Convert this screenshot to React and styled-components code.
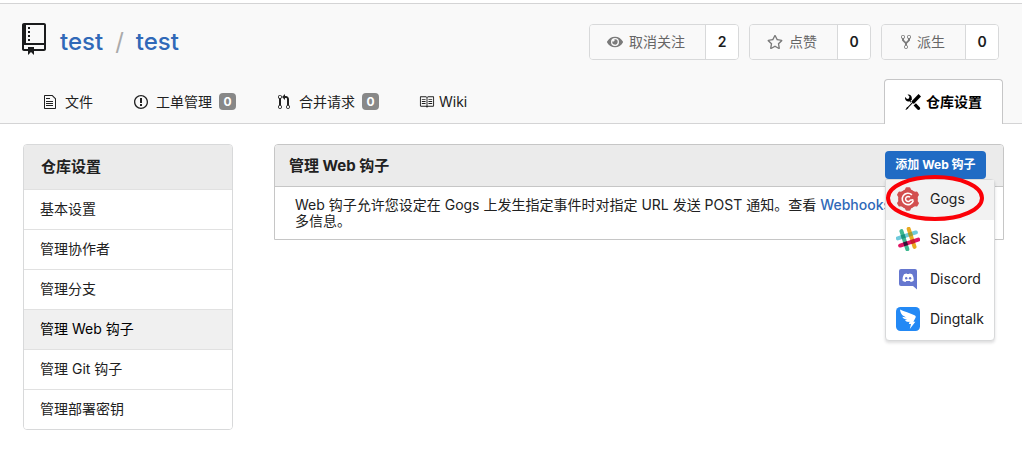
import React from "react";
import styled, { createGlobalStyle, css } from "styled-components";
import { FaEye, FaRegStar } from "react-icons/fa";

const GlobalStyle = createGlobalStyle`
  *, *::before, *::after { box-sizing: border-box; }
  body {
    margin: 0;
    background: #fff;
    color: #212121;
    font-family: Inter, "Noto Sans CJK SC", sans-serif;
    font-size: 14px;
    line-height: 16px;
  }
  button { font: inherit; cursor: pointer; }
  a { text-decoration: none; color: inherit; }
  ul { list-style: none; margin: 0; padding: 0; }
  h1, h2, h3, p { margin: 0; }
`;

const Header = styled.header`
  margin-top: 3px;
  padding: 20px 19px 0 22px;
  background: #f9f9f9;
  border-top: 1px solid #d4d4d5;
  border-bottom: 1px solid #d4d4d5;
`;

const TitleRow = styled.div`
  display: flex;
  align-items: center;
  justify-content: space-between;
  padding-right: 4px;
  height: 36px;
`;

const RepoTitle = styled.h1`
  display: flex;
  align-items: center;
  font-size: 24px;
  line-height: 32px;
  font-weight: 400;
  color: #1b1c1d;
`;

const RepoLink = styled.a`
  color: #3069b8;
  font-weight: 500;
`;

const RepoIcon = styled.span`
  display: flex;
  margin-right: 14px;
  padding-bottom: 6px;
`;

const Slash = styled.span`
  margin: 0 12px;
  color: #aaa;
`;

const Actions = styled.div`
  display: flex;
  gap: 10px;
`;

const ActionGroup = styled.div`
  display: flex;
  height: 36px;
  border: 1px solid #d8d9da;
  border-radius: 4px;
  overflow: hidden;
`;

const ActionButton = styled.button`
  display: flex;
  align-items: center;
  gap: 6px;
  padding: 0 20px 0 ${(p) => p.$start || 17}px;
  border: 0;
  background: #f9f9f9;
  color: #666;
  svg { color: #7a7a7a; }
`;

const Count = styled.a`
  display: flex;
  align-items: center;
  justify-content: center;
  width: 33px;
  border-left: 1px solid #d8d9da;
  background: #fff;
  font-weight: 600;
  color: #1b1c1d;
`;

const Tabs = styled.nav`
  display: flex;
  align-items: flex-end;
  gap: 4px;
  margin-top: 19px;
  margin-bottom: -1px;
  padding-left: 2px;
`;

const Tab = styled.a`
  display: flex;
  align-items: center;
  height: 45px;
  padding: 0 18px;
  gap: ${(p) => p.$gap || 7}px;
  color: #212121;
  ${(p) =>
    p.$active &&
    css`
      margin-left: auto;
      padding: 0 20px;
      border: 1px solid #c6c6c7;
      border-bottom: 0;
      border-radius: 4px 4px 0 0;
      background: #fff;
      color: #000;
      font-weight: 700;
    `}
`;

const TabIcon = styled.span`
  display: flex;
  justify-content: center;
  width: 16px;
`;

const Badge = styled.span`
  width: 17px;
  border-radius: 4px;
  background: #888;
  color: #fff;
  font-size: 12px;
  font-weight: 700;
  line-height: 17px;
  text-align: center;
`;

const Content = styled.main`
  display: grid;
  grid-template-columns: 210px 1fr;
  gap: 41px;
  align-items: start;
  padding: 20px 18px 19px 23px;
`;

const SideMenu = styled.nav`
  border: 1px solid #d8d9da;
  border-radius: 4px;
  overflow: hidden;
`;

const SideTitle = styled.h2`
  padding: 14px 17px;
  background: #ebebeb;
  font-size: 15px;
  line-height: 16px;
  font-weight: 700;
`;

const SideLink = styled.a`
  display: block;
  height: 40px;
  padding: 11px 16px;
  border-top: 1px solid #e1e1e1;
  background: ${(p) => (p.$active ? "#f0f0f0" : "#fff")};
  color: ${(p) => (p.$active ? "#000" : "#212121")};
`;

const Panel = styled.section`
  border: 1px solid #c6c6c6;
  border-radius: 4px 4px 0 0;
`;

const PanelHeader = styled.div`
  display: flex;
  align-items: flex-start;
  justify-content: space-between;
  height: 42px;
  padding: 6px 17px 0 14px;
  background: #ebebeb;
  border-bottom: 1px solid #c6c6c6;
  border-radius: 3px 3px 0 0;
`;

const PanelTitle = styled.h3`
  font-size: 15px;
  line-height: 30px;
  font-weight: 700;
`;

const PanelText = styled.p`
  padding: 10px 20px;
`;

const DocLink = styled.a`
  color: #3069b8;
  font-weight: 500;
`;

const Dropdown = styled.div`
  position: relative;
`;

const AddButton = styled.button`
  display: block;
  width: 101px;
  height: 28px;
  padding: 0;
  border: 0;
  border-radius: 4px;
  background: #206bc4;
  color: #fff;
  font-size: 12px;
  font-weight: 700;
`;

const HookMenu = styled.ul`
  position: absolute;
  top: 100%;
  left: 0;
  width: 110px;
  border: 1px solid #d8d9da;
  border-radius: 0 4px 4px 4px;
  background: #fff;
  box-shadow: 0 2px 3px rgba(34, 36, 38, 0.15);
`;

const HookItem = styled.a`
  display: flex;
  align-items: center;
  gap: 10px;
  height: 40px;
  padding: 0 0 2px 10px;
  background: ${(p) => (p.$active ? "#f2f2f2" : "transparent")};
  svg { flex: none; }
`;

const Marker = styled.svg`
  position: absolute;
  top: 23px;
  left: 0;
  z-index: 2;
  overflow: visible;
  pointer-events: none;
`;

const paths = {
  repo: [12, "M4 9H3V8h1v1zm0-3H3v1h1V6zm0-2H3v1h1V4zm0-2H3v1h1V2zm8-1v12c0 .55-.45 1-1 1H6v2l-1.5-1.5L3 16v-2H1c-.55 0-1-.45-1-1V1c0-.55.45-1 1-1h10c.55 0 1 .45 1 1zm-1 10H1v2h2v-1h3v1h5v-2zm0-10H2v9h9V1z"],
  file: [12, "M6 5H2V4h4v1zM2 8h7V7H2v1zm0 2h7V9H2v1zm0 2h7v-1H2v1zm10-7.5V14c0 .55-.45 1-1 1H1c-.55 0-1-.45-1-1V2c0-.55.45-1 1-1h7.5L12 4.5zM11 5L8 2H1v12h10V5z"],
  issue: [14, "M7 2.3c3.14 0 5.7 2.56 5.7 5.7s-2.56 5.7-5.7 5.7A5.71 5.71 0 0 1 1.3 8c0-3.14 2.56-5.7 5.7-5.7zM7 1C3.14 1 0 4.14 0 8s3.14 7 7 7 7-3.14 7-7-3.14-7-7-7zm1 3H6v5h2V4zm0 6H6v2h2v-2z"],
  pull: [12, "M11 11.28V5c-.03-.78-.34-1.47-.94-2.06C9.46 2.35 8.78 2.03 8 2H7V0L4 3l3 3V4h1c.27.02.48.11.69.31.21.2.3.42.31.69v6.28A1.993 1.993 0 0 0 10 15a1.993 1.993 0 0 0 1-3.72zm-1 2.92c-.66 0-1.2-.55-1.2-1.2 0-.65.55-1.2 1.2-1.2.65 0 1.2.55 1.2 1.2 0 .65-.55 1.2-1.2 1.2zM4 3c0-1.11-.89-2-2-2a1.993 1.993 0 0 0-1 3.72v6.56A1.993 1.993 0 0 0 2 15a1.993 1.993 0 0 0 1-3.72V4.72c.59-.34 1-.98 1-1.72zm-.8 10c0 .66-.55 1.2-1.2 1.2-.65 0-1.2-.55-1.2-1.2 0-.65.55-1.2 1.2-1.2.65 0 1.2.55 1.2 1.2zM2 4.2C1.34 4.2.8 3.65.8 3c0-.65.55-1.2 1.2-1.2.65 0 1.2.55 1.2 1.2 0 .65-.55 1.2-1.2 1.2z"],
  book: [17, "M3 5h4v1H3V5zm0 3h4V7H3v1zm0 2h4V9H3v1zm11-5h-4v1h4V5zm0 2h-4v1h4V7zm0 2h-4v1h4V9zm2-6v9c0 .55-.45 1-1 1H9.5l-1 1-1-1H2c-.55 0-1-.45-1-1V3c0-.55.45-1 1-1h5.5l1 1 1-1H15c.55 0 1 .45 1 1zm-8 .5L7.5 3H2v9h6V3.5zm7-.5H9.5l-.5.5V12h6V3z"],
  tools: [16, "M4.48 7.27c.26.26 1.28 1.33 1.28 1.33l.56-.58-.88-.91 1.69-1.8s-.76-.74-.43-.45c.32-1.19.03-2.51-.87-3.44C4.93.5 3.66.2 2.52.51l1.93 2-.51 1.96-1.89.52-1.93-1.99C-.19 4.17.1 5.48 1 6.4c.94.98 2.29 1.26 3.48.87zm6.44 1.94l-2.33 2.3 3.84 3.98c.31.33.73.49 1.14.49.41 0 .82-.16 1.14-.49.63-.65.63-1.7 0-2.35l-3.79-3.93zM16 2.53L13.55 0 6.33 7.46l.88.91-4.31 4.46-.99.53-1.39 2.27.35.37 2.2-1.44.51-1.02L7.9 9.08l.88.91L16 2.53z"],
  fork: [10, "M8 1a1.993 1.993 0 0 0-1 3.72V6L5 8 3 6V4.72A1.993 1.993 0 0 0 2 1a1.993 1.993 0 0 0-1 3.72V6.5l3 3v1.78A1.993 1.993 0 0 0 5 15a1.993 1.993 0 0 0 1-3.72V9.5l3-3V4.72A1.993 1.993 0 0 0 8 1zM2 4.2C1.34 4.2.8 3.65.8 3c0-.65.55-1.2 1.2-1.2.65 0 1.2.55 1.2 1.2 0 .65-.55 1.2-1.2 1.2zm3 10c-.66 0-1.2-.55-1.2-1.2 0-.65.55-1.2 1.2-1.2.65 0 1.2.55 1.2 1.2 0 .65-.55 1.2-1.2 1.2zm3-10c-.66 0-1.2-.55-1.2-1.2 0-.65.55-1.2 1.2-1.2.65 0 1.2.55 1.2 1.2 0 .65-.55 1.2-1.2 1.2z"],
};

function Octicon({ name, size = 16 }) {
  const [w, d] = paths[name];
  return (
    <svg width={(w * size) / 16} height={size} viewBox={`0 0 ${w} 16`} fill="currentColor" aria-hidden="true">
      <path d={d} />
    </svg>
  );
}

const GogsLogo = () => (
  <svg width="24" height="24" viewBox="0 0 24 24" aria-hidden="true">
    <g fill="#d34f4f">
      <circle cx="12" cy="12" r="9.800" />
      {[0, 60, 120, 180, 240, 300].map((a) => (
        <path key={a} transform={`rotate(${a} 12 12)`} d="M7 4Q9.300 3 9.500 1.300Q9.700.3 10.700.3H13.300Q14.300.3 14.500 1.300Q14.700 3 17 4z" />
      ))}
    </g>
    <path d="M15.900 7.800A5.700 5.700 0 1 0 17.400 13.600" fill="none" stroke="#fff" strokeWidth="1.600" />
    <path d="M14 10.300A2.500 2.500 0 1 0 14.200 13.300L17.400 12.700" fill="none" stroke="#fff" strokeWidth="1.500" />
  </svg>
);

const SlackLogo = () => (
  <svg width="24" height="24" viewBox="0 0 24 24" aria-hidden="true">
    <g transform="rotate(-18 12 12)" strokeWidth="4" strokeLinecap="round">
      <path d="M2.500 8.200H21.500" stroke="#6ecadc" />
      <path d="M15.800 2.500V21.500" stroke="#e9a820" />
      <path d="M8.200 2.500V21.500" stroke="#3eb991" />
      <path d="M2.500 15.800H21.500" stroke="#e01563" />
      <path d="M13.800 8.200h4" stroke="#9c9d35" strokeLinecap="butt" />
      <path d="M6.200 8.200h4" stroke="#1a937d" strokeLinecap="butt" />
      <path d="M6.200 15.800h4" stroke="#361238" strokeLinecap="butt" />
      <path d="M13.800 15.800h4" stroke="#cb2027" strokeLinecap="butt" />
    </g>
  </svg>
);

const DiscordLogo = () => (
  <svg width="24" height="24" viewBox="0 0 24 24" aria-hidden="true">
    <path fill="#6577cf" d="M5 2h14a2 2 0 0 1 2 2v18.500l-4-3.500H5a2 2 0 0 1-2-2V4a2 2 0 0 1 2-2z" />
    <path fill="#fff" d="M8 7.300Q9.500 6.500 10.700 6.400l.4.700h2l.4-.7q1.200.1 2.700.9Q17.900 10 17.800 13.500q-1.300 1.300-3.100 1.400l-.7-1h-3.800l-.7 1q-1.800-.1-3.100-1.400Q6.300 10 8 7.300z" />
    <circle cx="10.200" cy="11.300" r="1.200" fill="#6577cf" />
    <circle cx="14.100" cy="11.300" r="1.200" fill="#6577cf" />
  </svg>
);

const DingtalkLogo = () => (
  <svg width="24" height="24" viewBox="0 0 24 24" aria-hidden="true">
    <rect width="24" height="24" rx="4.500" fill="#2389f5" />
    <path fill="#fff" d="M4 2.500C8 4.500 14 6 18.500 8.200c1.200.6 1.500 1.300 1.100 2.400-.5 1.400-1.400 2.800-2.200 4.200h2l-5.600 7.200 1.200-4.900h-2.200l.8-2.300c-2 .4-3.600 0-4.500-1.800l2.300-.4C8.800 12.400 7 11.500 6.300 9.700l4.200.7C7.300 9.100 4.600 7.800 4 2.500z" />
  </svg>
);

const sideLinks = ["基本设置", "管理协作者", "管理分支", "管理 Web 钩子", "管理 Git 钩子", "管理部署密钥"];

const hooks = [
  ["Gogs", GogsLogo],
  ["Slack", SlackLogo],
  ["Discord", DiscordLogo],
  ["Dingtalk", DingtalkLogo],
];

export default function App() {
  return (
    <>
      <GlobalStyle />
      <Header>
        <TitleRow>
          <RepoTitle>
            <RepoIcon><Octicon name="repo" size={32} /></RepoIcon>
            <RepoLink href="#">test</RepoLink>
            <Slash>/</Slash>
            <RepoLink href="#">test</RepoLink>
          </RepoTitle>
          <Actions>
            <ActionGroup>
              <ActionButton type="button"><FaEye size={16} />取消关注</ActionButton>
              <Count href="#">2</Count>
            </ActionGroup>
            <ActionGroup>
              <ActionButton type="button"><FaRegStar size={16} />点赞</ActionButton>
              <Count href="#">0</Count>
            </ActionGroup>
            <ActionGroup>
              <ActionButton type="button" $start={19}><Octicon name="fork" />派生</ActionButton>
              <Count href="#">0</Count>
            </ActionGroup>
          </Actions>
        </TitleRow>
        <Tabs>
          <Tab href="#"><TabIcon><Octicon name="file" /></TabIcon>文件</Tab>
          <Tab href="#"><TabIcon><Octicon name="issue" /></TabIcon>工单管理<Badge>0</Badge></Tab>
          <Tab href="#"><TabIcon><Octicon name="pull" /></TabIcon>合并请求<Badge>0</Badge></Tab>
          <Tab href="#" $gap={4}><TabIcon><Octicon name="book" /></TabIcon>Wiki</Tab>
          <Tab href="#" $active $gap={5}><TabIcon><Octicon name="tools" /></TabIcon>仓库设置</Tab>
        </Tabs>
      </Header>
      <Content>
        <SideMenu>
          <SideTitle>仓库设置</SideTitle>
          {sideLinks.map((label, i) => (
            <SideLink key={label} href="#" $active={i === 3}>{label}</SideLink>
          ))}
        </SideMenu>
        <Panel>
          <PanelHeader>
            <PanelTitle>管理 Web 钩子</PanelTitle>
            <Dropdown>
              <AddButton type="button">添加 Web 钩子</AddButton>
              <HookMenu>
                {hooks.map(([name, Logo], i) => (
                  <li key={name}>
                    <HookItem href="#" $active={i === 0}><Logo />{name}</HookItem>
                  </li>
                ))}
              </HookMenu>
              <Marker width="100" height="48" viewBox="0 0 100 48" aria-hidden="true">
                <ellipse cx="50" cy="24" rx="47" ry="21" fill="none" stroke="#fb0007" strokeWidth="4" />
              </Marker>
            </Dropdown>
          </PanelHeader>
          <PanelText>
            Web 钩子允许您设定在 Gogs 上发生指定事件时对指定 URL 发送 POST 通知。查看 <DocLink href="#">Webhooks 文档</DocLink> 以获取更多信息。
          </PanelText>
        </Panel>
      </Content>
    </>
  );
}
